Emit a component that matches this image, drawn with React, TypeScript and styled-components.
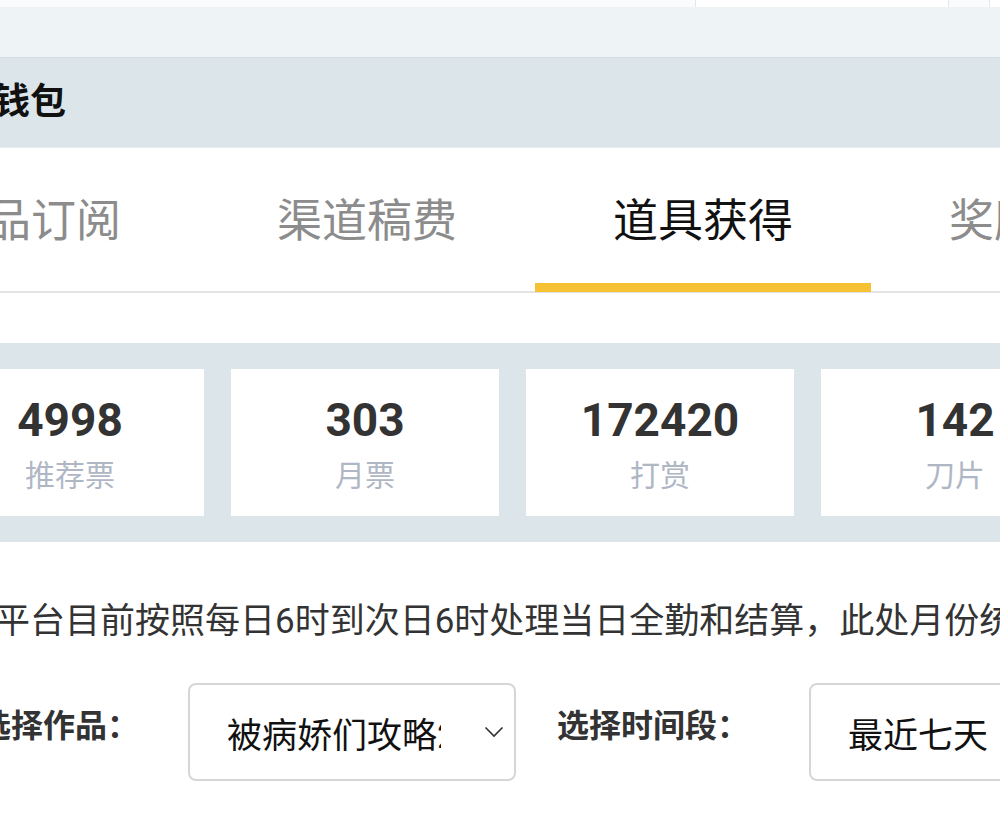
import React from "react";
import styled, { createGlobalStyle } from "styled-components";

const GlobalStyle = createGlobalStyle`
  html, body {
    margin: 0;
    padding: 0;
    background: #fff;
  }
  body {
    font-family: Roboto, "Noto Sans CJK SC", "Noto Sans", sans-serif;
    color: #333;
  }
`;

const Page = styled.div`
  width: 1000px;
  height: 825px;
  overflow: hidden;
  background: #fff;
`;

const TopStrip = styled.div`
  height: 7px;
  display: flex;
  background: #fafbfc;
`;

const TopButton = styled.div<{ w: number; offset: number }>`
  flex: 0 0 ${({ w }) => w}px;
  background: #fff;
  border-left: 1px solid #e4e7ea;
  border-right: 1px solid #e4e7ea;
  margin-left: ${({ offset }) => offset}px;
`;

const Backdrop = styled.div`
  height: 50px;
  background: #eef3f6;
`;

const HeaderBar = styled.div`
  height: 91px;
  background: #dbe5ea;
  border-top: 1px solid #d3dde2;
  border-bottom: 1px solid #e6ecef;
  box-sizing: border-box;
  display: flex;
  align-items: center;
  padding-bottom: 10px;
`;

const HeaderTitle = styled.h1`
  margin: 0 0 0 -6px;
  font-size: 36px;
  font-weight: 700;
  color: #111;
`;

const TabBar = styled.div`
  display: flex;
  margin-left: -137px;
  border-bottom: 2px solid #e3e3e3;
`;

const Tab = styled.div<{ active?: boolean }>`
  position: relative;
  flex: 0 0 336px;
  height: 143px;
  display: flex;
  align-items: center;
  justify-content: center;
  padding-bottom: 4px;
  box-sizing: border-box;
  font-size: 45px;
  color: ${({ active }) => (active ? "#111" : "#8c8c8c")};

  &::after {
    content: "";
    display: ${({ active }) => (active ? "block" : "none")};
    position: absolute;
    left: 0;
    right: 0;
    bottom: -1px;
    height: 9px;
    background: #f6c132;
  }
`;

const StatsPanel = styled.div`
  margin-top: 50px;
  background: #dbe5ea;
  padding: 26px 0;
  overflow: hidden;
`;

const CardRow = styled.div`
  display: flex;
  gap: 27px;
  margin-left: -64px;
`;

const StatCard = styled.div`
  flex: 0 0 268px;
  height: 147px;
  background: #fff;
  display: flex;
  flex-direction: column;
  align-items: center;
  padding-top: 24px;
  box-sizing: border-box;
`;

const StatValue = styled.div`
  font-family: Roboto, "Noto Sans CJK SC", sans-serif;
  font-weight: 700;
  font-size: 46px;
  line-height: 55px;
  color: #333;
`;

const StatLabel = styled.div`
  margin-top: 8px;
  font-size: 30px;
  line-height: 39px;
  color: #afb7c5;
`;

const Notice = styled.p`
  margin: 57px 0 0 -5px;
  font-size: 35px;
  line-height: 46px;
  color: #333;
  white-space: nowrap;
`;

const FilterRow = styled.div`
  display: flex;
  align-items: center;
  margin-top: 38px;
  margin-left: -21px;
`;

const FilterLabel = styled.span<{ gap: number }>`
  font-size: 32px;
  font-weight: 700;
  color: #333;
  margin-right: ${({ gap }) => gap}px;
  margin-bottom: 18px;
  white-space: nowrap;
`;

const Select = styled.div<{ w: number }>`
  flex: 0 0 ${({ w }) => w}px;
  height: 98px;
  box-sizing: border-box;
  border: 2px solid #d6d6d6;
  border-radius: 8px;
  display: flex;
  align-items: center;
  padding-left: 37px;
  margin-right: 41px;
`;

const SelectText = styled.span<{ clip?: number }>`
  font-size: 35px;
  color: #111;
  white-space: nowrap;
  overflow: hidden;
  ${({ clip }) => (clip ? `width: ${clip}px; flex: 0 0 ${clip}px;` : "")}
`;

const Chevron = styled.svg`
  margin-left: auto;
  margin-right: 10px;
  flex: 0 0 auto;
`;

const stats = [
  { value: "4998", label: "推荐票" },
  { value: "303", label: "月票" },
  { value: "172420", label: "打赏" },
  { value: "142", label: "刀片" },
];

const tabs = ["作品订阅", "渠道稿费", "道具获得", "奖励收入"];

const ChevronIcon = () => (
  <Chevron width="20" height="12" viewBox="0 0 20 12">
    <path d="M1.5 1.5 L10 10 L18.5 1.5" fill="none" stroke="#333" strokeWidth="1.6" />
  </Chevron>
);

export default function App() {
  return (
    <Page>
      <GlobalStyle />
      <TopStrip>
        <TopButton w={252} offset={695} />
        <TopButton w={40} offset={40} />
      </TopStrip>
      <Backdrop />
      <HeaderBar>
        <HeaderTitle>钱包</HeaderTitle>
      </HeaderBar>
      <TabBar>
        {tabs.map((t, i) => (
          <Tab key={t} active={i === 2}>
            {t}
          </Tab>
        ))}
      </TabBar>
      <StatsPanel>
        <CardRow>
          {stats.map((s) => (
            <StatCard key={s.label}>
              <StatValue>{s.value}</StatValue>
              <StatLabel>{s.label}</StatLabel>
            </StatCard>
          ))}
        </CardRow>
      </StatsPanel>
      <Notice>平台目前按照每日6时到次日6时处理当日全勤和结算，此处月份统计以自然月为准。</Notice>
      <FilterRow>
        <FilterLabel gap={49}>选择作品：</FilterLabel>
        <Select w={328}>
          <SelectText clip={214}>被病娇们攻略2</SelectText>
          <ChevronIcon />
        </Select>
        <FilterLabel gap={60}>选择时间段：</FilterLabel>
        <Select w={328}>
          <SelectText>最近七天</SelectText>
          <ChevronIcon />
        </Select>
      </FilterRow>
    </Page>
  );
}
